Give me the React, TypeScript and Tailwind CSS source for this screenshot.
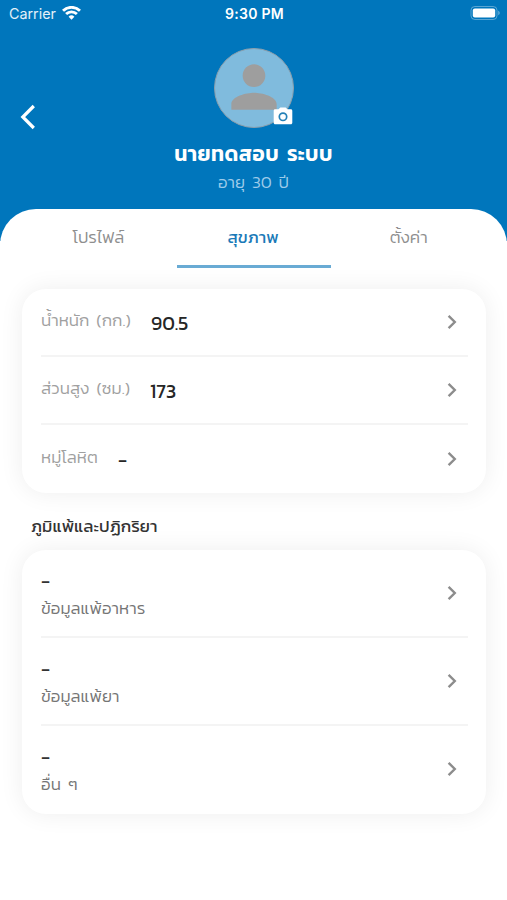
import { MdPerson } from "react-icons/md";

const measurements = [
  { label: "น้ำหนัก (กก.)", value: "90.5", labelClass: "w-[90px]", gap: "gap-5" },
  { label: "ส่วนสูง (ซม.)", value: "173", labelClass: "w-[90px]", gap: "gap-[19px]" },
  { label: "หมู่โลหิต", value: "-", labelClass: "w-[57px]", gap: "gap-5" },
];

const allergies = [
  { label: "ข้อมูลแพ้อาหาร", value: "-" },
  { label: "ข้อมูลแพ้ยา", value: "-" },
  { label: "อื่น ๆ", value: "-" },
];

function Chevron() {
  return (
    <svg width="10" height="16" viewBox="0 0 10 16" fill="none" className="mr-[11px] shrink-0">
      <path d="M1.6 1.8 7.8 8l-6.2 6.2" stroke="#8c8c8c" strokeWidth="2.4" />
    </svg>
  );
}

function StatusBar() {
  return (
    <div className="flex h-7 items-center justify-between pl-[9px] pr-[7px] text-white">
      <div className="flex w-[160px] items-center gap-[6px]">
        <span className="font-['Inter',sans-serif] text-[14.3px] leading-7 text-white/90">Carrier</span>
        <svg width="19" height="14" viewBox="0 0 19 14" fill="none" stroke="#fff" strokeWidth="2.9" className="-mt-0.5">
          <path d="M1 4.8a12.2 12.2 0 0 1 17 0" />
          <path d="M4.1 8a7.8 7.8 0 0 1 10.8 0" />
          <path d="M9.5 13.8 6.6 10.7a4.2 4.2 0 0 1 5.8 0Z" fill="#fff" stroke="none" />
        </svg>
      </div>
      <span className="font-['Inter',sans-serif] text-[14px] font-semibold leading-7 tracking-[0.3px]">9:30 PM</span>
      <div className="flex w-[160px] justify-end">
        <svg width="30" height="14" viewBox="0 0 30 14" className="-mt-0.5">
          <rect x="1" y="0.5" width="26" height="13" rx="3.8" fill="none" stroke="#fff" strokeOpacity="0.35" />
          <rect x="2.8" y="2.5" width="22.4" height="9" rx="2" fill="#fff" />
          <path d="M28.3 4.8c1.8.7 1.8 3.7 0 4.4Z" fill="#fff" fillOpacity="0.45" />
        </svg>
      </div>
    </div>
  );
}

function Avatar() {
  return (
    <div className="relative size-20 rounded-full border border-[#8c9fac] bg-[#80bbdd]">
      <MdPerson className="absolute left-[5px] top-[4px] size-[68px] text-[#9e9e9e]" />
      <svg width="20" height="18" viewBox="0 0 20 18" className="absolute left-[58px] top-[58px]">
        <path
          d="M6.5 1.2 7.4.4h5.2l1.9 1.8h3.3c.9 0 1.5.6 1.5 1.5v12c0 .9-.6 1.5-1.5 1.5H2.2c-.9 0-1.5-.6-1.5-1.5v-12c0-.9.6-1.5 1.5-1.5h3.3Z"
          fill="#fff"
        />
        <circle cx="10" cy="9.8" r="3.7" fill="none" stroke="#2581b7" strokeWidth="1.7" />
      </svg>
    </div>
  );
}

export default function App() {
  return (
    <div className="h-[900px] w-[507px] overflow-hidden whitespace-nowrap bg-white font-['Kanit','Noto_Sans',sans-serif] text-[#333]">
      <header className="h-[241px] bg-[#0076bc]">
        <StatusBar />
        <div className="grid grid-cols-[60px_1fr_60px] pt-5">
          <button className="ml-[19px] mt-[56px] h-[26px] w-[18px]">
            <svg width="18" height="26" viewBox="0 0 18 26" fill="none">
              <path d="M14.8 2 3.8 13l11 11" stroke="#fff" strokeWidth="3.2" />
            </svg>
          </button>
          <div className="flex flex-col items-center">
            <Avatar />
            <h1 className="mt-3 text-[21px] font-semibold leading-7 tracking-[0.4px] text-white [word-spacing:3px]">
              นายทดสอบ ระบบ
            </h1>
            <p className="mt-0.5 text-[17px] font-light leading-6 text-[#9dcbea] [word-spacing:3px]">อายุ 30 ปี</p>
          </div>
        </div>
      </header>

      <main className="relative -mt-8 rounded-t-[36px] bg-white pl-[22px] pr-[21px]">
        <nav className="grid h-[59px] grid-cols-3 text-center text-[17px] leading-[56px]">
          <span className="pr-0.5 font-light text-[#8e8e8e]">โปรไฟล์</span>
          <span className="border-b-[3px] border-[#69abd4] pr-0.5 text-[#1a7ab8]">สุขภาพ</span>
          <span className="font-light text-[#8e8e8e]">ตั้งค่า</span>
        </nav>

        <section className="mt-[21px] rounded-[24px] bg-white pl-[19px] pr-[18px] shadow-[0_0_24px_rgba(0,0,0,0.07)]">
          {measurements.map((m, i) => (
            <div
              key={m.label}
              className={`flex h-[68px] items-center ${m.gap} ${i < 2 ? "border-b-2 border-[#f4f4f4]" : ""}`}
            >
              <span
                className={`${m.labelClass} pb-[3px] text-[17px] font-light tracking-[0.05px] text-[#a0a0a0] [word-spacing:3px]`}
              >
                {m.label}
              </span>
              <span className="flex-1 pt-[3px] text-[19.5px] text-[#262626]">{m.value}</span>
              <Chevron />
            </div>
          ))}
        </section>

        <h2 className="ml-[9px] mt-[19px] h-[38px] text-[17px] leading-7 tracking-[0.06px]">ภูมิแพ้และปฏิกริยา</h2>

        <section className="rounded-[24px] bg-white pl-[19px] pr-[18px] shadow-[0_0_24px_rgba(0,0,0,0.07)]">
          {allergies.map((a, i) => (
            <div
              key={a.label}
              className={`flex h-[88px] justify-between border-b-2 pt-[18px] ${
                i < 2 ? "border-[#f4f4f4]" : "border-transparent"
              }`}
            >
              <div className="flex flex-col">
                <span className="text-[19.5px] leading-[27px]">{a.value}</span>
                <span className="text-[17px] font-light leading-[26px] tracking-[0.05px] text-[#757575] [word-spacing:3px]">
                  {a.label}
                </span>
              </div>
              <div className="mt-[17px]">
                <Chevron />
              </div>
            </div>
          ))}
        </section>
      </main>
    </div>
  );
}
